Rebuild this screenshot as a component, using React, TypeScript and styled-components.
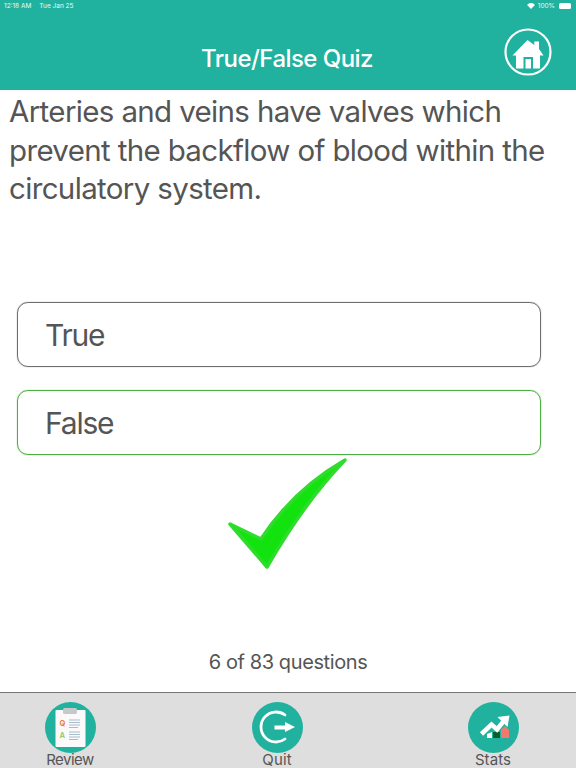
import React from "react";
import styled, { createGlobalStyle } from "styled-components";

const Global = createGlobalStyle`
  html, body { margin: 0; padding: 0; background: #fff; }
  body { font-family: Inter, "Liberation Sans", sans-serif; }
`;
const Page = styled.div`
  width: 576px; height: 768px; display: flex; flex-direction: column; overflow: hidden; background: #fff;
`;
const Header = styled.header`
  height: 90px; background: #20b29e; color: #fff; display: flex; flex-direction: column; flex: none;
`;
const StatusBar = styled.div`
  height: 12px; padding: 0 5px 0 4px; display: flex; align-items: center; justify-content: space-between;
  font-size: 6.5px; color: #eef9f7;
`;
const StatusGroup = styled.div`
  display: flex; align-items: center; gap: 3px;
`;
const ClockText = styled.span`
  margin-right: 5px;
`;
const NavRow = styled.div`
  flex: 1; display: grid; grid-template-columns: 1fr auto 1fr; align-items: center; padding-top: 1px;
`;
const Title = styled.h1`
  grid-column: 2; margin: 0 2px 0 0; text-align: center; font-size: 24px; font-weight: 500; letter-spacing: -0.55px; padding-top: 14px;
`;
const HomeButton = styled.div`
  grid-column: 3; justify-self: end; width: 48px; height: 48px; margin-right: 24px;
`;
const Question = styled.p`
  margin: 0; padding: 2px 9px 0; height: 210px; box-sizing: border-box; font-size: 29.5px; line-height: 38.5px; color: #555; letter-spacing: -0.65px;
`;
const Options = styled.div`
  display: flex; flex-direction: column; gap: 23px; padding: 2px 35px 0 17px;
`;
const Option = styled.div<{ $correct?: boolean }>`
  height: 65px; box-sizing: border-box; border-radius: 11px; border: 1px solid ${p => (p.$correct ? "#4caf3f" : "#6e6e6e")};
  box-shadow: 0 0 1px ${p => (p.$correct ? "#4caf3f" : "#6e6e6e")};
  display: flex; align-items: center; padding-left: 27px; font-size: 30px; letter-spacing: -1.2px; color: #555;
`;
const CheckArea = styled.div`
  display: flex; justify-content: center; padding-top: 2px; height: 114px; margin-left: -1px;
`;
const Count = styled.div`
  margin-top: auto; height: 42px; text-align: center; font-size: 20px; color: #555; letter-spacing: -0.4px; line-height: 24px;
`;
const TabBar = styled.nav`
  height: 76px; flex: none; box-sizing: border-box; background: #dedede; border-top: 1px solid #777; display: grid;
  grid-template-columns: 140px 274px 158px; padding-top: 9px;
`;
const Tab = styled.div`
  display: flex; flex-direction: column; align-items: center;
`;
const TabIcon = styled.div`
  width: 51px; height: 51px; flex: none;
`;
const TabLabel = styled.span<{ $tight?: boolean }>`
  font-size: 15px; line-height: 14px; color: #555;
  letter-spacing: ${p => (p.$tight ? "-0.5px" : "0.1px")};
`;

const HomeIcon = () => (
  <svg width="48" height="48" viewBox="0 0 48 48">
    <circle cx="24" cy="24" r="22.5" fill="none" stroke="#fff" strokeWidth="2.2" />
    <path fill="#fff" fillRule="evenodd" d="M23.5 12 L30.3 17 V13.5 H35 V21 L39.5 27.5 H36 V40.5 H12 V27.5 H8.5 Z M19.5 29 V40.5 H29 V29 Z M21.5 31 H27 V40.5 H21.5 Z" />
  </svg>
);
const ReviewIcon = () => (
  <svg width="51" height="51" viewBox="0 0 51 51">
    <circle cx="25.5" cy="25.5" r="25.5" fill="#20b29e" />
    <rect x="10.5" y="8" width="30" height="37" fill="#fafafa" rx="1" />
    <rect x="18" y="6" width="14" height="6" rx="1.5" fill="#c8c8c8" />
    <text x="14.5" y="23.5" fontSize="7.5" fontWeight="700" fill="#ea7a4a" fontFamily="Inter, sans-serif">Q</text>
    <text x="14.5" y="35.5" fontSize="7.5" fontWeight="700" fill="#9ccb70" fontFamily="Inter, sans-serif">A</text>
    <g stroke="#a8bccb" strokeWidth="1.1">
      <path d="M24 18H35M24 20.5H35M24 23H35M24 25.5H33" />
      <path d="M24 30H35M24 32.5H35M24 35H35M24 37.5H33" />
    </g>
  </svg>
);
const QuitIcon = () => (
  <svg width="51" height="51" viewBox="0 0 51 51">
    <circle cx="25.5" cy="25.5" r="25.5" fill="#20b29e" />
    <path d="M33 13 A15 15 0 1 0 33 37" fill="none" stroke="#fff" strokeWidth="2.8" strokeLinecap="round" />
    <path fill="#fff" d="M22.5 23.5 H33 V20 L43 25 L33 30 V27.5 H22.5 Z" />
  </svg>
);
const StatsIcon = () => (
  <svg width="51" height="51" viewBox="0 0 51 51">
    <circle cx="25.5" cy="25.5" r="25.5" fill="#20b29e" />
    <path d="M19 36 V32 L24 30 V36 Z" fill="#fff" />
    <path d="M25 30 H32 V36 H25 Z" fill="#0d5c2c" />
    <path d="M33 28 L37 24 L41 28 V36 H33 Z" fill="#f07a70" />
    <path fill="none" stroke="#fff" strokeWidth="4.5" d="M13.5 32 L23.5 22.5 L29 27.5 L37 17.5" />
    <path fill="#fff" d="M29.5 15 L41.5 13.5 L39.5 25 Z" />
  </svg>
);
const CheckMark = () => (
  <svg width="122" height="113" viewBox="0 0 122 113">
    <path d="M3 67 L34 82 C55 50 85 22 118 3 C90 32 62 72 40 110 Z" fill="#12e30f" stroke="#2fdc2c" strokeWidth="3.5" strokeLinejoin="round" />
  </svg>
);
const WifiIcon = () => (
  <svg width="8" height="6" viewBox="0 0 9 7">
    <path fill="#fff" d="M4.5 7 L0 2.2 C2.5 -.6 6.5 -.6 9 2.2 Z" />
  </svg>
);
const Battery = styled.span`
  width: 12px; height: 6px; border-radius: 1.5px; background: #fff; display: inline-block; margin-left: 1px;
`;

export default function App() {
  return (
    <Page>
      <Global />
      <Header>
        <StatusBar>
          <StatusGroup>
            <ClockText>12:18 AM</ClockText>
            <span>Tue Jan 25</span>
          </StatusGroup>
          <StatusGroup>
            <WifiIcon />
            <span>100%</span>
            <Battery />
          </StatusGroup>
        </StatusBar>
        <NavRow>
          <Title>True/False Quiz</Title>
          <HomeButton><HomeIcon /></HomeButton>
        </NavRow>
      </Header>
      <Question>Arteries and veins have valves which prevent the backflow of blood within the circulatory system.</Question>
      <Options>
        <Option>True</Option>
        <Option $correct>False</Option>
      </Options>
      <CheckArea><CheckMark /></CheckArea>
      <Count>6 of 83 questions</Count>
      <TabBar>
        <Tab><TabIcon><ReviewIcon /></TabIcon><TabLabel $tight>Review</TabLabel></Tab>
        <Tab><TabIcon><QuitIcon /></TabIcon><TabLabel>Quit</TabLabel></Tab>
        <Tab><TabIcon><StatsIcon /></TabIcon><TabLabel>Stats</TabLabel></Tab>
      </TabBar>
    </Page>
  );
}
